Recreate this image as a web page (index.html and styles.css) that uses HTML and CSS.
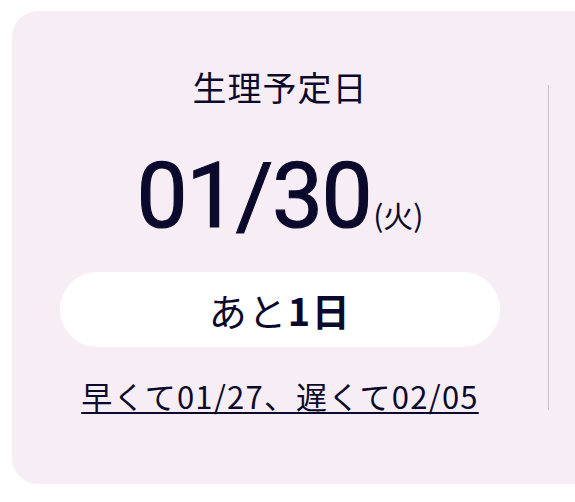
FILE: index.html
```html
<!DOCTYPE html>
<html lang="ja">
<head>
<meta charset="utf-8">
<link rel="stylesheet" href="styles.css">
</head>
<body>
<div class="card">
  <div class="main">
    <div class="title">生理予定日</div>
    <div class="date"><span class="num">01/30</span><span class="dow">(火)</span></div>
    <div class="pill"><span class="pre">あと</span><span class="days">1日</span></div>
    <a class="range" href="#">早くて01/27、遅くて02/05</a>
  </div>
  <div class="divider"></div>
  <div class="side"></div>
</div>
</body>
</html>
```
FILE: styles.css
```css
html, body {
  margin: 0;
  padding: 0;
  background: #ffffff;
  overflow: hidden;
}
body {
  width: 575px;
  height: 502px;
  font-family: "Noto Sans CJK JP", "Noto Sans", sans-serif;
  color: #0c0a2c;
}
.card {
  margin: 11px 0 0 12px;
  width: 563px;
  height: 473px;
  background: #f7eef5;
  border-radius: 26px 0 0 26px;
  display: flex;
  align-items: flex-start;
}
.main {
  width: 536px;
  display: flex;
  flex-direction: column;
  align-items: center;
  padding-top: 57px;
}
.title {
  font-size: 34px;
  line-height: 38px;
  height: 38px;
  letter-spacing: 1px;
}
.date {
  margin-top: 44px;
  display: flex;
  align-items: baseline;
  height: 92px;
}
.num {
  font-family: Roboto, "Liberation Sans", sans-serif;
  font-weight: 400;
  font-size: 91px;
  line-height: 92px;
  letter-spacing: -1.5px;
  -webkit-text-stroke: 1.2px #0c0a2c;
}
.dow {
  font-size: 30px;
  margin-left: 2px;
}
.pill {
  margin-top: 30px;
  width: 440px;
  height: 75px;
  background: #ffffff;
  border-radius: 38px;
  display: flex;
  align-items: center;
  justify-content: center;
  font-size: 38px;
  letter-spacing: 1.5px;
}
.days {
  font-weight: 700;
}
.range {
  margin-top: 30px;
  font-size: 31px;
  line-height: 38px;
  letter-spacing: 1.2px;
  color: #0c0a2c;
  text-decoration: underline;
  text-decoration-thickness: 1.5px;
  text-underline-offset: 3px;
}
.divider {
  width: 1px;
  height: 325px;
  margin-top: 74px;
  background: #c9bfcd;
}
.side {
  flex: 1;
}
```
